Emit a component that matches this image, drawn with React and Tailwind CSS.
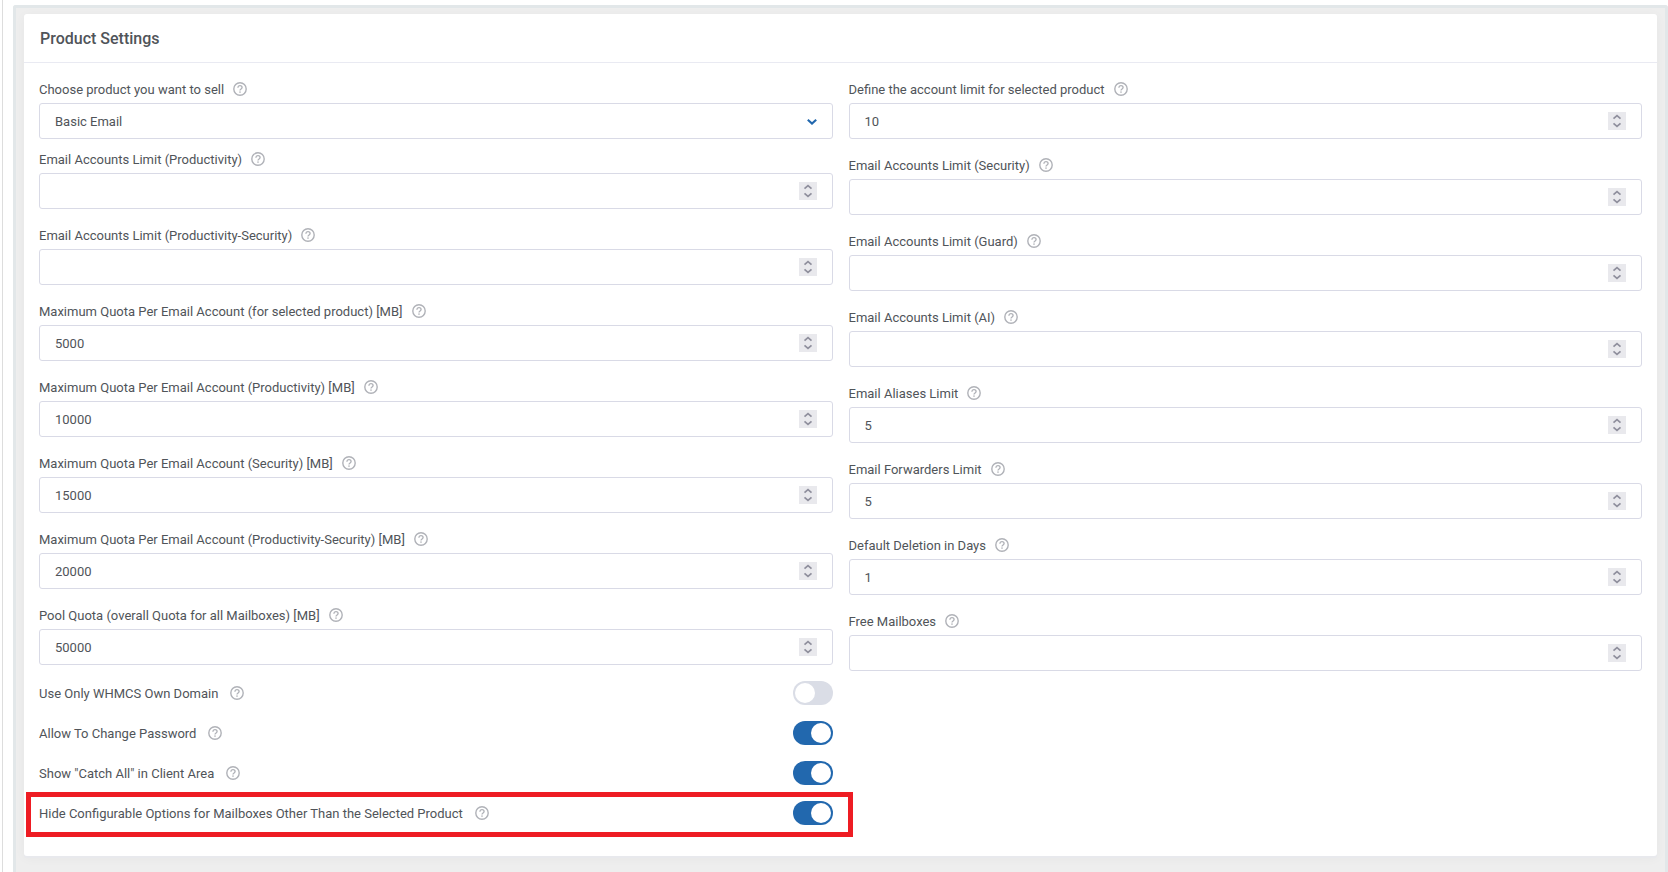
import React, { useId, useRef, useState } from "react";

function HelpIcon() {
  return (
    <svg viewBox="0 0 14 14" className="size-3.5" fill="none" aria-hidden="true">
      <circle cx="7" cy="7" r="6.2" stroke="currentColor" strokeWidth="1.4" />
      <path
        d="M4.9 5.7C4.9 4.4 5.8 3.6 7 3.6s2.1.8 2.1 2c0 1.3-2.1 1.5-2.1 3"
        stroke="currentColor"
        strokeWidth="1.3"
      />
      <rect x="6.3" y="9.4" width="1.4" height="1.4" fill="currentColor" />
    </svg>
  );
}

function HelpButton({ label }) {
  return (
    <button type="button" aria-label={`Help: ${label}`} className="text-[#b0b2b8]">
      <HelpIcon />
    </button>
  );
}

function FieldLabel({ id, label }) {
  return (
    <div className="mb-1 flex h-5 items-center gap-[9px]">
      <label htmlFor={id} className="pt-0.5">
        {label}
      </label>
      <HelpButton label={label} />
    </div>
  );
}

function NumberField({ label, value }) {
  const id = useId();
  const ref = useRef(null);
  return (
    <div className="mb-4">
      <FieldLabel id={id} label={label} />
      <div className="flex h-9 items-center rounded-[3px] border border-[#d9dae6] pr-[15px]">
        <input
          id={id}
          ref={ref}
          type="number"
          defaultValue={value}
          className="h-full min-w-0 flex-1 pl-[15px] outline-none [appearance:textfield] [&::-webkit-inner-spin-button]:appearance-none"
        />
        <div className="flex size-[18px] flex-col bg-[#e9e9ed] text-[#8f8f9d]">
          <button type="button" aria-label={`Increase ${label}`} onClick={() => ref.current.stepUp()}>
            <svg viewBox="0 0 18 9" className="h-[9px] w-[18px]" fill="none" aria-hidden="true">
              <path d="M5.5 6.6 9 3.6l3.5 3" stroke="currentColor" strokeWidth="1.7" />
            </svg>
          </button>
          <button type="button" aria-label={`Decrease ${label}`} onClick={() => ref.current.stepDown()}>
            <svg viewBox="0 0 18 9" className="h-[9px] w-[18px]" fill="none" aria-hidden="true">
              <path d="M5.5 2.4 9 5.4l3.5-3" stroke="currentColor" strokeWidth="1.7" />
            </svg>
          </button>
        </div>
      </div>
    </div>
  );
}

function ProductSelect() {
  const id = useId();
  return (
    <div className="mb-2.5">
      <FieldLabel id={id} label="Choose product you want to sell" />
      <div className="relative">
        <select
          id={id}
          className="h-9 w-full appearance-none rounded-[3px] border border-[#d9dae6] bg-white px-[15px] pt-0.5 outline-none"
        >
          <option>Basic Email</option>
        </select>
        <svg
          viewBox="0 0 10 6"
          className="pointer-events-none absolute top-4 right-4 h-1.5 w-2.5 text-[#2268ae]"
          fill="none"
          aria-hidden="true"
        >
          <path d="M.8.8 5 4.6 9.2.8" stroke="currentColor" strokeWidth="2.1" />
        </svg>
      </div>
    </div>
  );
}

function Toggle({ label, on, highlighted }) {
  const id = useId();
  const [checked, setChecked] = useState(on);
  return (
    <div className="relative flex h-6 items-center justify-between">
      <div className="flex items-center gap-3">
        <label htmlFor={id} className="pt-0.5">
          {label}
        </label>
        <HelpButton label={label} />
      </div>
      <input
        id={id}
        type="checkbox"
        role="switch"
        checked={checked}
        onChange={(e) => setChecked(e.target.checked)}
        className="h-6 w-10 appearance-none rounded-full bg-[#dadde6] p-0.5 before:block before:size-5 before:rounded-full before:bg-white checked:bg-[#2268ae] checked:before:translate-x-4"
      />
      {highlighted && (
        <div className="pointer-events-none absolute -top-[9px] -right-5 -bottom-3 -left-[13px] border-5 border-[#ee1c23]" />
      )}
    </div>
  );
}

const leftFields = [
  ["Email Accounts Limit (Productivity)", ""],
  ["Email Accounts Limit (Productivity-Security)", ""],
  ["Maximum Quota Per Email Account (for selected product) [MB]", 5000],
  ["Maximum Quota Per Email Account (Productivity) [MB]", 10000],
  ["Maximum Quota Per Email Account (Security) [MB]", 15000],
  ["Maximum Quota Per Email Account (Productivity-Security) [MB]", 20000],
  ["Pool Quota (overall Quota for all Mailboxes) [MB]", 50000],
];

const rightFields = [
  ["Define the account limit for selected product", 10],
  ["Email Accounts Limit (Security)", ""],
  ["Email Accounts Limit (Guard)", ""],
  ["Email Accounts Limit (AI)", ""],
  ["Email Aliases Limit", 5],
  ["Email Forwarders Limit", 5],
  ["Default Deletion in Days", 1],
  ["Free Mailboxes", ""],
];

const toggles = [
  ["Use Only WHMCS Own Domain", false],
  ["Allow To Change Password", true],
  ['Show "Catch All" in Client Area', true],
  ["Hide Configurable Options for Mailboxes Other Than the Selected Product", true, true],
];

export default function App() {
  return (
    <div className="flex min-h-screen bg-white pl-0.5 font-[Roboto,sans-serif] text-[13px] leading-5 text-[#505459]">
      <div className="flex flex-1 border-l border-[#dddddd] pt-[5px] pl-2.5">
        <main className="flex-1 rounded-t-[3px] border-3 border-b-0 border-[#e2e7e9] bg-[#eeeeee] px-2 pt-1.5 pb-4">
          <section className="rounded-[3px] bg-white shadow-[0_2px_0_#e8e9ed,0_2px_12px_rgba(0,0,0,0.04)]">
            <header className="flex h-[49px] items-center border-b border-[#e9eaf2] px-4 pt-0.5">
              <h1 className="text-base font-medium">Product Settings</h1>
            </header>
            <form className="grid grid-cols-2 gap-4 px-[15px] pt-4 pb-[31px]">
              <div>
                <ProductSelect />
                {leftFields.map(([label, value]) => (
                  <NumberField key={label} label={label} value={value} />
                ))}
                <div className="flex flex-col gap-4">
                  {toggles.map(([label, on, highlighted]) => (
                    <Toggle key={label} label={label} on={on} highlighted={highlighted} />
                  ))}
                </div>
              </div>
              <div>
                {rightFields.map(([label, value]) => (
                  <NumberField key={label} label={label} value={value} />
                ))}
              </div>
            </form>
          </section>
        </main>
      </div>
    </div>
  );
}
